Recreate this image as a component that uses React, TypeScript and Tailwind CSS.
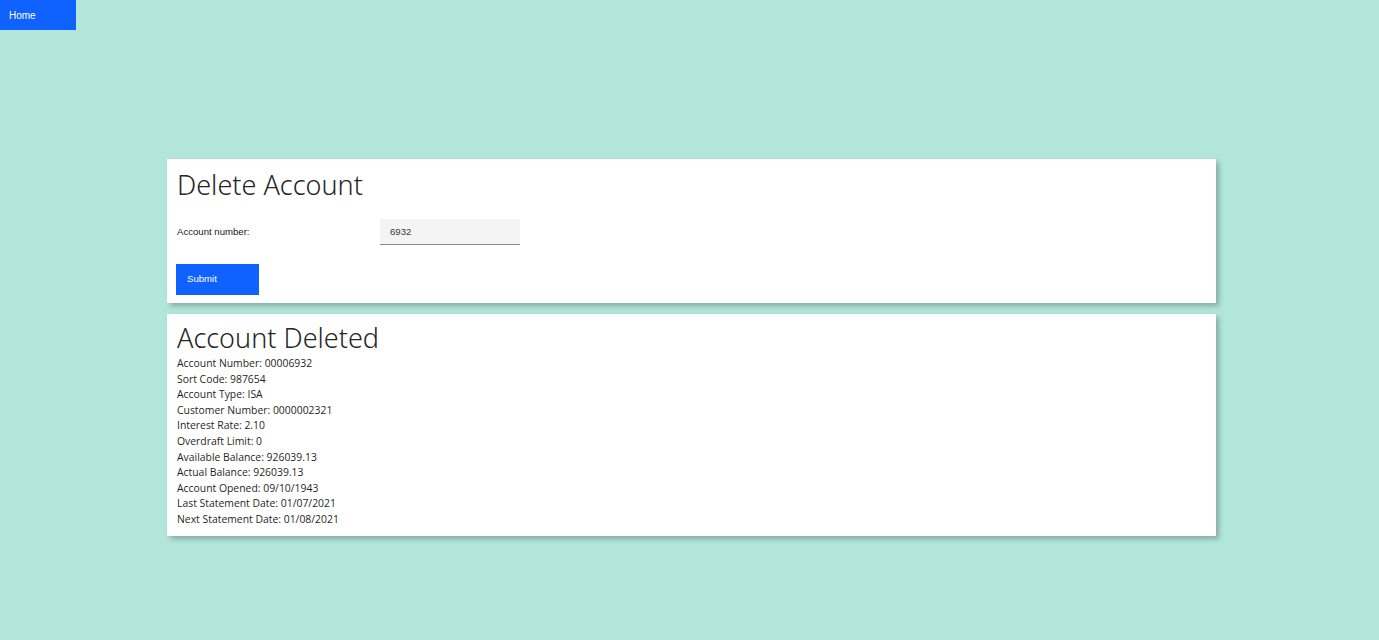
const details: [string, string][] = [
  ["Account Number", "00006932"],
  ["Sort Code", "987654"],
  ["Account Type", "ISA"],
  ["Customer Number", "0000002321"],
  ["Interest Rate", "2.10"],
  ["Overdraft Limit", "0"],
  ["Available Balance", "926039.13"],
  ["Actual Balance", "926039.13"],
  ["Account Opened", "09/10/1943"],
  ["Last Statement Date", "01/07/2021"],
  ["Next Statement Date", "01/08/2021"],
];

function App() {
  return (
    <div className="min-h-[640px] w-full bg-[#b2e6da] font-['Liberation_Sans',sans-serif] text-[#161616]">
      <div className="flex h-[30px]">
        <button className="w-[76px] h-[30px] bg-[#0f62fe] text-white text-[10px] text-left pl-[9px]">
          Home
        </button>
      </div>

      <div className="ml-[167px] w-[1049px] mt-[129px] flex flex-col gap-[11px]">
        <div className="bg-white shadow-[3px_3px_5px_rgba(0,0,0,0.25)] h-[144px] px-[10px] pt-[9px]">
          <h1 className="text-[27px] leading-[34px] font-light font-['Noto_Sans',sans-serif] text-[#262626]">
            Delete Account
          </h1>
          <div className="flex items-center mt-[17px]">
            <label className="w-[203px] text-[9.6px]">Account number:</label>
            <input
              defaultValue="6932"
              className="w-[140px] h-[26px] bg-[#f4f4f4] border-b border-[#8d8d8d] px-[10px] text-[9.6px] text-[#393939] outline-none"
            />
          </div>
          <button className="mt-[19px] -ml-[1px] w-[83px] h-[31px] bg-[#0f62fe] text-white text-[9.6px] text-left pl-[11px]">
            Submit
          </button>
        </div>

        <div className="bg-white shadow-[3px_3px_5px_rgba(0,0,0,0.25)] h-[222px] px-[10px] pt-[7px]">
          <h2 className="text-[27px] leading-[34px] font-light font-['Noto_Sans',sans-serif] text-[#262626]">
            Account Deleted
          </h2>
          <div className="flex flex-col mt-[1px] font-['Open_Sans',sans-serif] text-[10.4px] leading-[15.6px] text-[#1f1f1f]">
            {details.map(([k, v]) => (
              <div key={k}>
                {k}: {v}
              </div>
            ))}
          </div>
        </div>
      </div>
    </div>
  );
}

export default App;
